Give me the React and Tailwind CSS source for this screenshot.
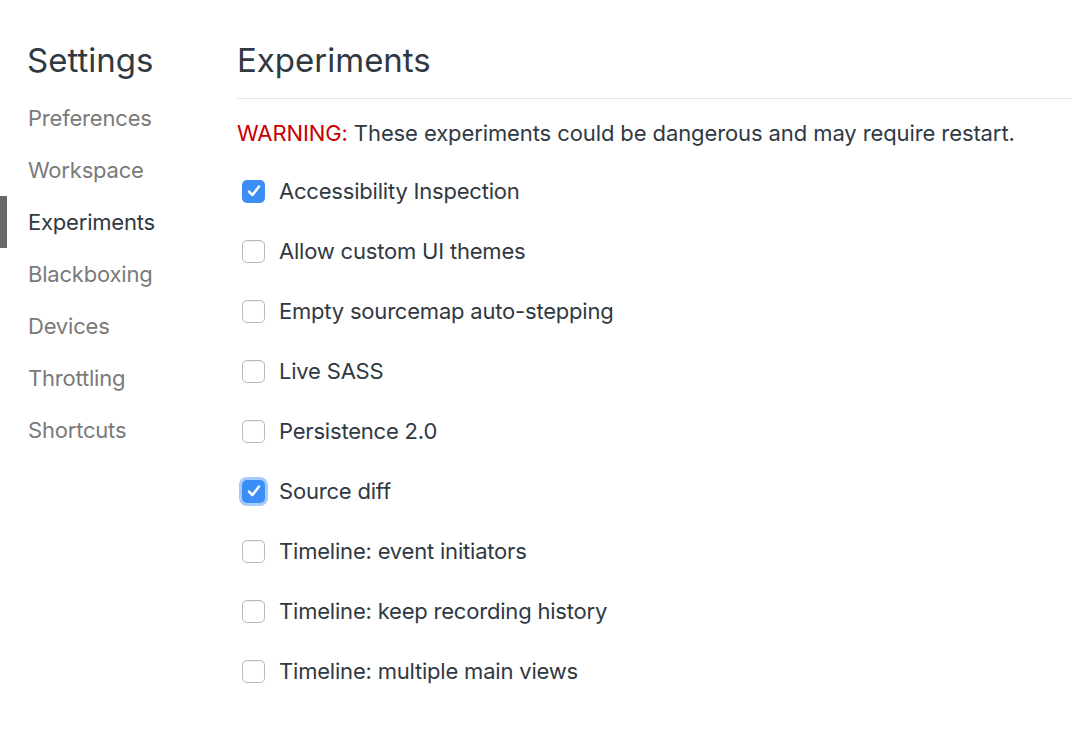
import React from "react";

const items = ["Preferences", "Workspace", "Experiments", "Blackboxing", "Devices", "Throttling", "Shortcuts"];
const experiments = [
  { label: "Accessibility Inspection", checked: true },
  { label: "Allow custom UI themes" },
  { label: "Empty sourcemap auto-stepping" },
  { label: "Live SASS" },
  { label: "Persistence 2.0" },
  { label: "Source diff", checked: true, focused: true },
  { label: "Timeline: event initiators" },
  { label: "Timeline: keep recording history" },
  { label: "Timeline: multiple main views" },
];

function Checkbox({ checked, focused }) {
  if (checked) {
    return (
      <div
        className={
          "w-[23px] h-[23px] rounded-[5px] bg-[#3a8ef6] flex items-center justify-center " +
          (focused ? "ring-[3px] ring-[#a6cbf8]" : "")
        }
      >
        <svg width="16" height="16" viewBox="0 0 16 16" fill="none">
          <path d="M3 8.6 L6.4 12 L13 3.6" stroke="white" strokeWidth="2.5" strokeLinecap="round" strokeLinejoin="round" />
        </svg>
      </div>
    );
  }
  return <div className="w-[23px] h-[23px] rounded-[5px] border border-[#b9b9b9] bg-white shadow-[inset_0_1px_1px_rgba(0,0,0,0.06)]" />;
}

export default function App() {
  return (
    <div className="w-[1072px] h-[732px] bg-white flex overflow-hidden" style={{ fontFamily: "Inter, 'Noto Sans', sans-serif" }}>
      <div className="w-[237px] shrink-0 pt-[40px]">
        <div className="h-[40px] leading-[40px] pl-[27px] text-[33px] text-[#303942]">Settings</div>
        <div className="mt-[12px] flex flex-col">
          {items.map((it) => {
            const active = it === "Experiments";
            return (
              <div key={it} className="relative h-[52px] flex items-center pl-[28px]">
                {active && <div className="absolute left-0 top-0 w-[7px] h-full bg-[#696969]" />}
                <span className={"text-[22px] tracking-[-0.2px] " + (active ? "text-[#303942]" : "text-[#7a7a7a]")}>{it}</span>
              </div>
            );
          })}
        </div>
      </div>
      <div className="flex-1 pt-[40px]">
        <div className="h-[40px] leading-[40px] text-[33px] text-[#303942]">Experiments</div>
        <div className="mt-[18px] border-b border-[#e5e5e5]" />
        <div className="mt-[20px] h-[28px] leading-[28px] text-[22px] text-[#303942] tracking-[-0.1px]">
          <span className="text-[#c80000]">WARNING:</span> These experiments could be dangerous and may require restart.
        </div>
        <div className="mt-[14px] flex flex-col">
          {experiments.map((e) => (
            <div key={e.label} className="h-[60px] flex items-center">
              <div className="ml-[5px] mr-[14px]">
                <Checkbox checked={e.checked} focused={e.focused} />
              </div>
              <span className="text-[22px] text-[#303942] tracking-[-0.2px]">{e.label}</span>
            </div>
          ))}
        </div>
      </div>
    </div>
  );
}
